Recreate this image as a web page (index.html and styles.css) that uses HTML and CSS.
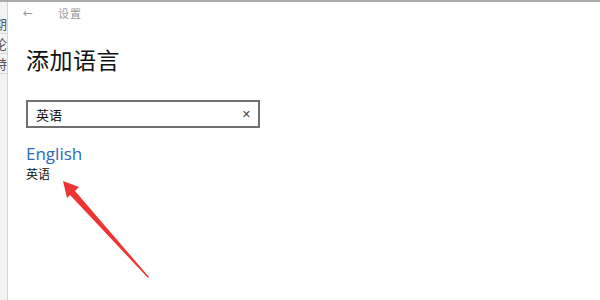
FILE: index.html
```html
<!DOCTYPE html>
<html lang="zh-CN">
<head>
    <meta charset="UTF-8">
    <title>设置</title>
    <link rel="stylesheet" href="styles.css">
</head>
<body>
    <div class="window">
        <div class="side">
            <span class="side-a">期</span>
            <span class="side-b">论</span>
            <span class="side-c">特</span>
        </div>
        <div class="main">
            <div class="titlebar">
                <span class="back">&#8592;</span>
                <span class="app-name">设置</span>
            </div>
            <h1>添加语言</h1>
            <div class="search">
                <span class="search-text">英语</span>
                <span class="clear">&#x2715;</span>
            </div>
            <div class="result">
                <div class="result-name">English</div>
                <div class="result-sub">英语</div>
            </div>
            <svg class="arrow" width="120" height="120" viewBox="0 0 120 120">
                <polygon points="15,11 31,17 27,21 101,107 100,108 22,25 19,28" fill="#f03434"/>
            </svg>
        </div>
    </div>
</body>
</html>
```

FILE: styles.css
```css
* {
    margin: 0;
    padding: 0;
    box-sizing: border-box;
}

body {
    width: 600px;
    height: 300px;
    overflow: hidden;
    background: #fff;
    font-family: "Noto Sans CJK SC", "Noto Sans", sans-serif;
}

.window {
    display: flex;
    height: 300px;
    border-top: 2px solid #a9a9a9;
}

/* janela de trás */
.side {
    width: 8px;
    background: #f2f3f5;
    border-right: 1px solid #d6d6d6;
    overflow: hidden;
    color: #555;
    font-size: 13px;
    display: flex;
    flex-direction: column;
}

.side span {
    display: block;
    margin-left: -6px;
    height: 20px;
    line-height: 20px;
    border-bottom: 1px solid #d9d9d9;
}

.side-a {
    margin-top: 12px;
}

.main {
    flex: 1;
    position: relative;
    padding-left: 18px;
}

.titlebar {
    display: flex;
    align-items: center;
    height: 22px;
    color: #9a9a9a;
    font-size: 11px;
}

.back {
    font-family: "DejaVu Sans", sans-serif;
    font-size: 12px;
    margin-left: -3px;
    width: 35px;
}

.app-name {
    letter-spacing: 1px;
}

h1 {
    font-weight: 400;
    font-size: 23px;
    color: #111;
    margin-top: 20px;
    line-height: 30px;
    letter-spacing: 0.5px;
}

.search {
    margin-top: 26px;
    width: 234px;
    height: 28px;
    border: 2px solid #707070;
    display: flex;
    align-items: center;
    justify-content: space-between;
    padding: 0 7px 0 8px;
    font-size: 13px;
    color: #111;
}

.clear {
    font-family: "DejaVu Sans", sans-serif;
    font-size: 11px;
    color: #444;
}

.result {
    margin-top: 14px;
}

.result-name {
    font-family: "Open Sans", "Noto Sans", sans-serif;
    font-size: 17px;
    line-height: 24px;
    color: #2a69c0;
}

.result-sub {
    font-size: 12px;
    line-height: 16px;
    color: #111;
}

.arrow {
    position: absolute;
    left: 40px;
    top: 168px;
}
```
